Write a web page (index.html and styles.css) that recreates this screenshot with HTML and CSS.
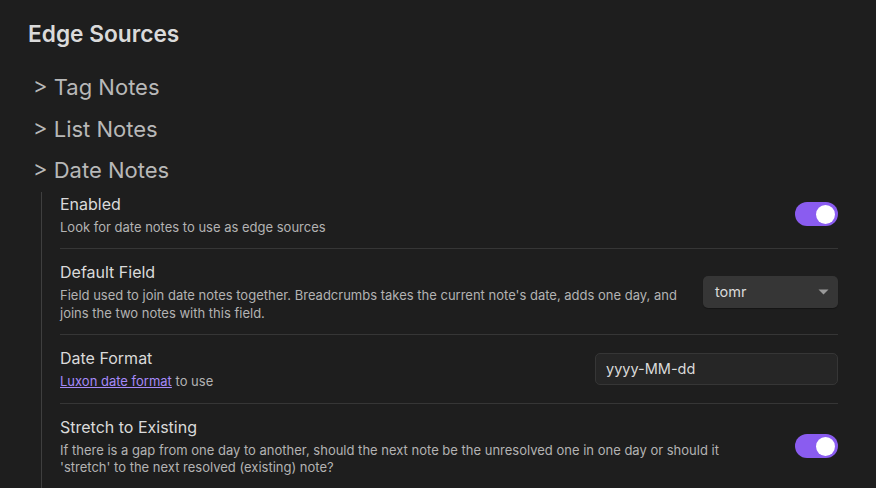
FILE: index.html
```html
<!DOCTYPE html>
<html>
<head>
<meta charset="utf-8">
<link rel="stylesheet" href="styles.css">
</head>
<body>
<div class="page">
  <h2 class="title">Edge Sources</h2>
  <div class="group">&gt; Tag Notes</div>
  <div class="group">&gt; List Notes</div>
  <div class="group">&gt; Date Notes</div>
  <div class="nested">
    <div class="item first">
      <div class="info">
        <div class="name">Enabled</div>
        <div class="desc">Look for date notes to use as edge sources</div>
      </div>
      <div class="control toggle-wrap"><div class="toggle"><div class="knob"></div></div></div>
    </div>
    <div class="item">
      <div class="info">
        <div class="name">Default Field</div>
        <div class="desc">Field used to join date notes together. Breadcrumbs takes the current note's date, adds one day, and joins the two notes with this field.</div>
      </div>
      <div class="control">
        <div class="dropdown"><span>tomr</span><svg class="arrow" width="11" height="6" viewBox="0 0 11 6"><path d="M0.5 0.5h10L5.5 5.5z" fill="#9a9a9a"/></svg></div>
      </div>
    </div>
    <div class="item">
      <div class="info">
        <div class="name">Date Format</div>
        <div class="desc"><a class="link" href="#">Luxon date format</a> to use</div>
      </div>
      <div class="control"><div class="input">yyyy-MM-dd</div></div>
    </div>
    <div class="item">
      <div class="info">
        <div class="name">Stretch to Existing</div>
        <div class="desc">If there is a gap from one day to another, should the next note be the unresolved one in one day or should it 'stretch' to the next resolved (existing) note?</div>
      </div>
      <div class="control toggle-wrap"><div class="toggle"><div class="knob"></div></div></div>
    </div>
  </div>
</div>
</body>
</html>
```

FILE: styles.css
```css
html, body {
  margin: 0;
  padding: 0;
  background: #1e1e1e;
  height: 100%;
  overflow: hidden;
}
body {
  font-family: Inter, "Noto Sans", sans-serif;
  color: #dadada;
}
.page {
  padding: 20px 38px 0 28px;
}
.title {
  margin: 0;
  font-size: 22.7px;
  line-height: 28px;
  font-weight: 600;
  color: #dadada;
}
.group {
  margin-left: 5px;
  font-size: 22px;
  line-height: 41.5px;
  color: #b8b8b8;
}
.title + .group {
  margin-top: 19px;
}
.nested {
  margin-left: 13px;
  border-left: 1px solid #3f3f3f;
  padding-left: 18px;
  padding-bottom: 40px;
}
.item {
  display: flex;
  align-items: center;
  padding: 12px 0;
  border-top: 1px solid #363636;
}
.item.first {
  border-top: none;
  padding-top: 1px;
}
.info {
  flex: 1;
  margin-right: 16px;
}
.name {
  font-size: 16px;
  line-height: 22px;
  color: #dadada;
}
.desc {
  margin-top: 4px;
  font-size: 13px;
  line-height: 17.5px;
  color: #b3b3b3;
}
.link {
  color: #a68af9;
  text-decoration: underline;
}
.control {
  display: flex;
  align-items: center;
}
.toggle-wrap {
  padding-left: 10px;
}
.toggle {
  width: 43px;
  height: 24px;
  border-radius: 12px;
  background: #8a5cf0;
  position: relative;
}
.knob {
  position: absolute;
  right: 3px;
  top: 2.5px;
  width: 19px;
  height: 19px;
  border-radius: 50%;
  background: #ffffff;
}
.dropdown {
  width: 135px;
  height: 32px;
  box-sizing: border-box;
  border-radius: 5px;
  background: #363636;
  display: flex;
  align-items: center;
  justify-content: space-between;
  padding: 0 9px 0 12px;
  font-size: 14.5px;
  color: #dadada;
  box-shadow: 0 1px 1px rgba(0,0,0,0.3);
}
.input {
  width: 243px;
  height: 32px;
  box-sizing: border-box;
  border-radius: 5px;
  background: #262626;
  border: 1px solid #363636;
  padding: 0 10px;
  display: flex;
  align-items: center;
  font-size: 14.5px;
  color: #dadada;
}
```
